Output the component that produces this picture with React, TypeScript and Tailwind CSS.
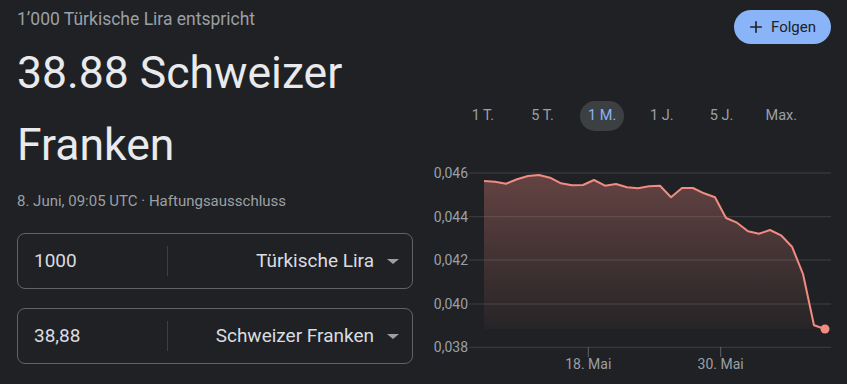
import { Plus } from "lucide-react";

const ranges = ["1 T.", "5 T.", "1 M.", "1 J.", "5 J.", "Max."];

// traced from the reference, local chart coords
const ys = [
  31, 31.7, 33.7, 29.3, 26, 25, 27.7, 33.3, 35.3, 35, 30, 35.7, 34, 37.3, 38.3, 36.3,
  35.7, 47.3, 38, 38, 43.3, 47.3, 68, 72.7, 81.3, 83.7, 80, 85.3, 96.7, 124, 175.3, 179,
];
const pts = ys.map((y, i) => [64 + i * 11, y] as const);

const grid = [
  { y: 23, label: "0,046" },
  { y: 66.7, label: "0,044" },
  { y: 110, label: "0,042" },
  { y: 154, label: "0,040" },
  { y: 197.3, label: "0,038" },
];

function ConverterRow({ value, currency }: { value: string; currency: string }) {
  return (
    <div className="flex items-center h-[56px] rounded-lg border border-[#5f6368]">
      <div className="w-[149px] pl-4 text-[19px] text-[#dadce0]">{value}</div>
      <div className="w-px h-[30px] bg-[#3c4043]" />
      <div className="flex-1 flex items-center justify-end pr-[13px] text-[19px] text-[#dadce0]">
        {currency}
        <span className="ml-[13px] w-0 h-0 border-l-[6px] border-r-[6px] border-t-[5px] border-l-transparent border-r-transparent border-t-[#9aa0a6]" />
      </div>
    </div>
  );
}

function Chart() {
  const line = pts.map(([x, y]) => `${x},${y}`).join(" ");
  const area = `M64,179 L${pts.map(([x, y]) => `${x},${y}`).join(" L")} L405,179 Z`;
  return (
    <svg width="427" height="234" viewBox="0 0 427 234" className="block">
      <defs>
        <linearGradient id="fill" x1="0" y1="0" x2="0" y2="1">
          <stop offset="0%" stopColor="#f28b82" stopOpacity="0.32" />
          <stop offset="100%" stopColor="#f28b82" stopOpacity="0.03" />
        </linearGradient>
      </defs>
      {grid.map((g) => (
        <g key={g.label}>
          <line x1="49" x2="411" y1={g.y} y2={g.y} stroke="#3c4043" strokeWidth="1" />
          <text x="48" y={g.y + 5} textAnchor="end" fontSize="14" fill="#9aa0a6" fontFamily="Roboto, Arial, sans-serif">
            {g.label}
          </text>
        </g>
      ))}
      <path d={area} fill="url(#fill)" />
      <polyline points={line} fill="none" stroke="#f28b82" strokeWidth="2" strokeLinejoin="round" />
      <circle cx="405" cy="179" r="4.5" fill="#f28b82" />
      {[
        { x: 168.3, label: "18. Mai" },
        { x: 300.7, label: "30. Mai" },
      ].map((t) => (
        <g key={t.label}>
          <line x1={t.x} x2={t.x} y1="197" y2="207" stroke="#5f6368" strokeWidth="1" />
          <text x={t.x} y="219" textAnchor="middle" fontSize="14" fill="#9aa0a6" fontFamily="Roboto, Arial, sans-serif">
            {t.label}
          </text>
        </g>
      ))}
    </svg>
  );
}

export default function App() {
  return (
    <div className="w-full h-[384px] overflow-hidden bg-[#202124] font-[Roboto,Arial,sans-serif] flex">
      <div className="w-[420px] pl-[17px] pr-[7px]">
        <div className="pt-[7px] text-[17.5px] leading-6 text-[#9aa0a6]">1’000 Türkische Lira entspricht</div>
        <div className="mt-[6px] text-[44.5px] leading-[72px] text-[#e8eaed]">38.88 Schweizer Franken</div>
        <div className="mt-[10px] text-[15px] leading-5 text-[#9aa0a6]">8. Juni, 09:05 UTC · Haftungsausschluss</div>
        <div className="mt-[22px] flex flex-col gap-[19px]">
          <ConverterRow value="1000" currency="Türkische Lira" />
          <ConverterRow value="38,88" currency="Schweizer Franken" />
        </div>
      </div>
      <div className="flex-1 flex flex-col">
        <div className="flex justify-end pt-[10px] pr-4">
          <button className="flex items-center h-[34px] pl-[13px] pr-[15px] rounded-full bg-[#8ab4f8] text-[#202124] text-[15px]">
            <Plus size={18} strokeWidth={2.2} />
            <span className="ml-[6px]">Folgen</span>
          </button>
        </div>
        <div className="mt-[57px] pl-[33px] flex">
          {ranges.map((r) => (
            <div key={r} className="w-[59.7px] flex justify-center">
              <span
                className={
                  r === "1 M."
                    ? "h-[30px] px-2 rounded-full bg-[#3c4043] text-[#8ab4f8] text-[14.5px] flex items-center"
                    : "h-[30px] text-[#9aa0a6] text-[14.5px] flex items-center"
                }
              >
                {r}
              </span>
            </div>
          ))}
        </div>
        <div className="mt-[19px]">
          <Chart />
        </div>
      </div>
    </div>
  );
}
